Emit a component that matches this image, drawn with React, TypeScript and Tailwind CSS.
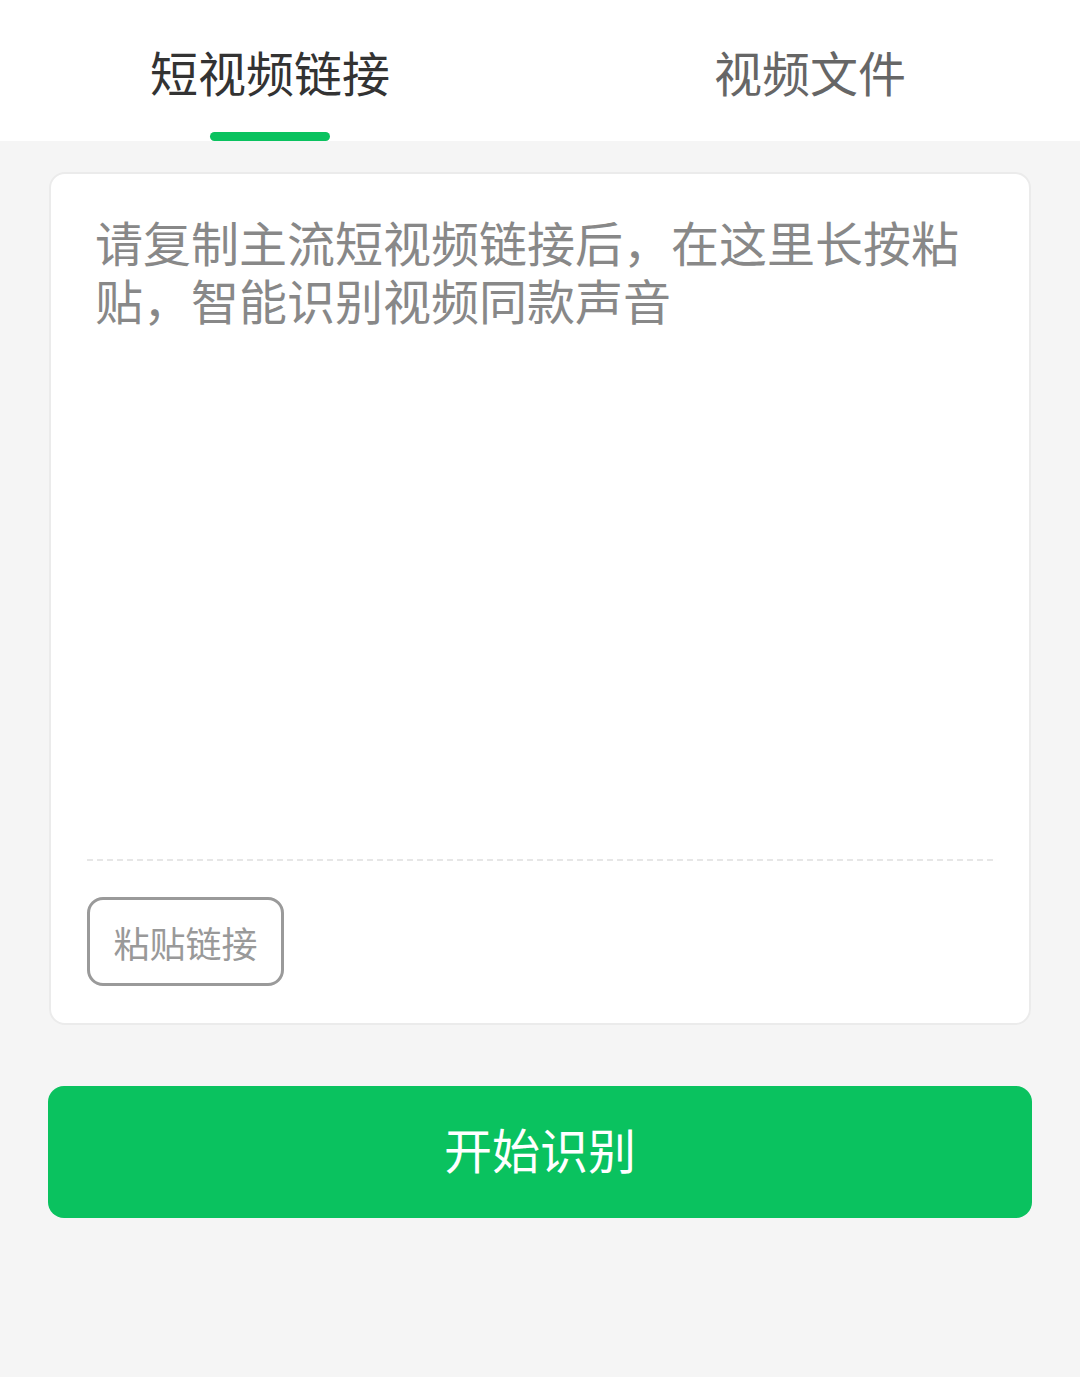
import React from "react";

const font = { fontFamily: '"Noto Sans CJK SC", "Noto Sans", sans-serif' };

export default function App() {
  return (
    <div className="w-[1080px] min-h-[1377px] bg-[#f5f5f5]" style={font}>
      <div className="h-[141px] bg-white flex">
        <div className="flex-1 flex flex-col items-center">
          <div className="h-[132px] flex items-center text-[48px] leading-none text-[#333] pt-[9px]">短视频链接</div>
          <div className="w-[120px] h-[9px] rounded-full bg-[#0ac25f]" />
        </div>
        <div className="flex-1 flex flex-col items-center">
          <div className="h-[132px] flex items-center text-[48px] leading-none text-[#666] pt-[9px]">视频文件</div>
        </div>
      </div>
      <div className="px-[49px] pt-[31px]">
        <div className="bg-white border-2 border-[#ebebeb] rounded-[16px] px-[36px] pb-[37px]">
          <div className="h-[687px] pt-[38px] px-[8px] text-[48px] leading-[58px] text-[#888] border-b-2 border-dashed border-[#e6e6e6]">
            请复制主流短视频链接后，在这里长按粘贴，智能识别视频同款声音
          </div>
          <div className="mt-[36px] w-[197px] h-[89px] rounded-[16px] border-[3px] border-[#9a9a9a] flex items-center justify-center text-[36px] text-[#999]">
            粘贴链接
          </div>
        </div>
      </div>
      <div className="px-[48px] pt-[61px]">
        <div className="h-[132px] rounded-[16px] bg-[#0ac25f] flex items-center justify-center text-[48px] text-white pb-[9px]">
          开始识别
        </div>
      </div>
    </div>
  );
}
